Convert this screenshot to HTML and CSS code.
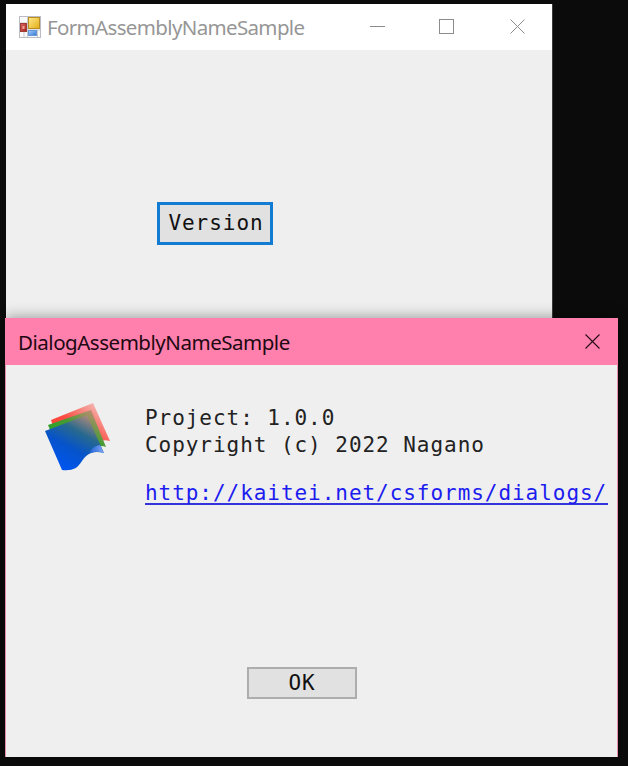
FILE: index.html
```html
<!DOCTYPE html>
<html lang="en">
<head>
<meta charset="utf-8">
<title>FormAssemblyNameSample</title>
<link rel="stylesheet" href="styles.css">
</head>
<body>
<main class="desktop">
  <section class="form-window">
    <header class="form-titlebar">
      <svg class="app-icon" width="22" height="22" viewBox="0 0 22 22">
        <defs>
          <linearGradient id="gold" x2="1" y2="1"><stop stop-color="#ffe98a"/><stop offset="1" stop-color="#e3ad16"/></linearGradient>
          <linearGradient id="sky" x2="1" y2="1"><stop stop-color="#a5cdfa"/><stop offset="1" stop-color="#3277d6"/></linearGradient>
          <linearGradient id="brick" x2="1" y2="1"><stop stop-color="#dc6a5e"/><stop offset="1" stop-color="#a51f1c"/></linearGradient>
        </defs>
        <rect x=".5" y=".5" width="21" height="21" fill="#fafafa" stroke="#bcbcc4"/>
        <path d="M1 7h7M8 14h13M5 15v6M8.500 1v20M18.500 14v7" stroke="#c9c9d1" fill="none"/>
        <rect x="9.500" y="1.500" width="11" height="11" fill="url(#gold)" stroke="#b98f22"/>
        <rect x="1.500" y="7.500" width="6" height="8" fill="url(#brick)" stroke="#a03c38"/>
        <rect x="3.500" y="10" width="2" height="3" fill="#eda49b"/>
        <rect x="9.500" y="14.500" width="8" height="5" fill="url(#sky)" stroke="#6796d5"/>
      </svg>
      <h1 class="form-title">FormAssemblyNameSample</h1>
      <svg class="window-controls" width="157" height="16" viewBox="0 0 157 16" fill="none" stroke="#8c8c8c">
        <path d="M0 7.500H15"/>
        <rect x="69.500" y=".5" width="14" height="14"/>
        <path d="M140.500 .5l14 14M154.500 .5l-14 14"/>
      </svg>
    </header>
    <div class="form-body"><button class="version-button">Version</button></div>
  </section>
  <section class="dialog">
    <header class="dialog-titlebar">
      <h2 class="dialog-title">DialogAssemblyNameSample</h2>
      <svg width="16" height="16" viewBox="0 0 16 16" fill="none" stroke="#260d16" stroke-width="1.100">
        <path d="M.5 .5l14 14M14.500 .5l-14 14"/>
      </svg>
    </header>
    <div class="dialog-body">
      <div class="about">
        <svg class="logo" width="68" height="70" viewBox="0 0 68 70">
          <defs>
            <linearGradient id="red" x1=".1" y1=".8" x2=".72" y2="0"><stop stop-color="#ff3a2e"/><stop offset=".5" stop-color="#fb4b41"/><stop offset="1" stop-color="#f4b5b0"/></linearGradient>
            <linearGradient id="green" x1=".2" y1=".8" x2=".8" y2="0"><stop stop-color="#1aa51f"/><stop offset=".55" stop-color="#459b32"/><stop offset="1" stop-color="#c58c76"/></linearGradient>
            <linearGradient id="blue" x1=".25" y1=".9" x2=".78" y2="0"><stop stop-color="#0055ec"/><stop offset=".35" stop-color="#0653c9"/><stop offset=".65" stop-color="#28698e"/><stop offset="1" stop-color="#bd8d78"/></linearGradient>
            <linearGradient id="edge" x1="0" x2="1"><stop stop-color="#1c62d4"/><stop offset="1" stop-color="#81a4f4"/></linearGradient>
          </defs>
          <path d="M7 17L49 0L66 38Q55 35 45 44L20 56Z" fill="url(#red)"/>
          <path d="M4 22L47 7L62 44Q54 41 44 48L20 60Z" fill="url(#green)"/>
          <path d="M1 28L43 12L60 50C48 47 43 51 38 58C33 66 28 68 18 67Z" fill="url(#blue)"/>
          <path d="M56 42L60 50Q51 47.500 45 50.500Q48 43 56 42Z" fill="url(#edge)"/>
        </svg>
        <div class="details">
          <p>Project: 1.0.0</p>
          <p>Copyright (c) 2022 Nagano</p>
          <a class="project-link" href="http://kaitei.net/csforms/dialogs/">http://kaitei.net/csforms/dialogs/</a>
        </div>
      </div>
      <button class="ok-button">OK</button>
    </div>
  </section>
</main>
</body>
</html>
```
FILE: styles.css
```css
* { box-sizing: border-box; }
body { margin: 0; background: #0b0b0b; font-family: "Noto Sans", sans-serif; }
h1, h2, p { margin: 0; font-weight: 400; }
.desktop { height: 766px; padding: 4px 10px 9px 5px; overflow: hidden; }
.form-window { width: 547px; height: 314px; margin-left: 1px; background: #efefef; border-right: 1px solid #3b3b3b; }
.form-titlebar { display: flex; align-items: center; height: 46px; padding: 0 25px 0 13px; background: #fff; color: #969696; }
.app-icon { margin-right: 6px; }
.form-title, .dialog-title { font-size: 20.5px; line-height: 30px; white-space: nowrap; }
.form-title { letter-spacing: -.65px; }
.window-controls { margin-left: auto; }
.form-body { padding: 152px 0 0 151px; }
button { display: block; padding: 0; border-radius: 0; background: #e1e1e1; color: #111; }
button, .details { font-family: "DejaVu Sans Mono", monospace; font-size: 21px; letter-spacing: .95px; }
.version-button { width: 116px; height: 43px; padding: 0 0 1px 2px; border: 3px solid #127bd2; }
.dialog { position: relative; height: 439px; background: #efefef; border: 1px solid #e88caa; border-width: 0 1px; box-shadow: 0 0 14px rgba(0, 0, 0, .4); }
.dialog-titlebar { display: flex; align-items: center; justify-content: space-between; height: 47px; padding: 0 16px 0 12px; background: #ff80ac; color: #210812; box-shadow: 1px 0 #ff80ac, -1px 0 #ff80ac; }
.dialog-title { padding-top: 1px; letter-spacing: -.47px; }
.dialog-body { padding-top: 38px; }
.about { display: flex; height: 264px; padding-left: 38px; }
.logo { margin-right: 33px; }
.details { line-height: 27px; color: #222; white-space: nowrap; padding-top: 2px; }
.project-link { display: block; width: 463px; height: 25px; margin-top: 21px; border-bottom: 2px solid #3434dc; color: #1c1cef; text-decoration: none; }
.ok-button { width: 110px; height: 32px; margin-left: 241px; border: 2px solid #adadad; }
```
